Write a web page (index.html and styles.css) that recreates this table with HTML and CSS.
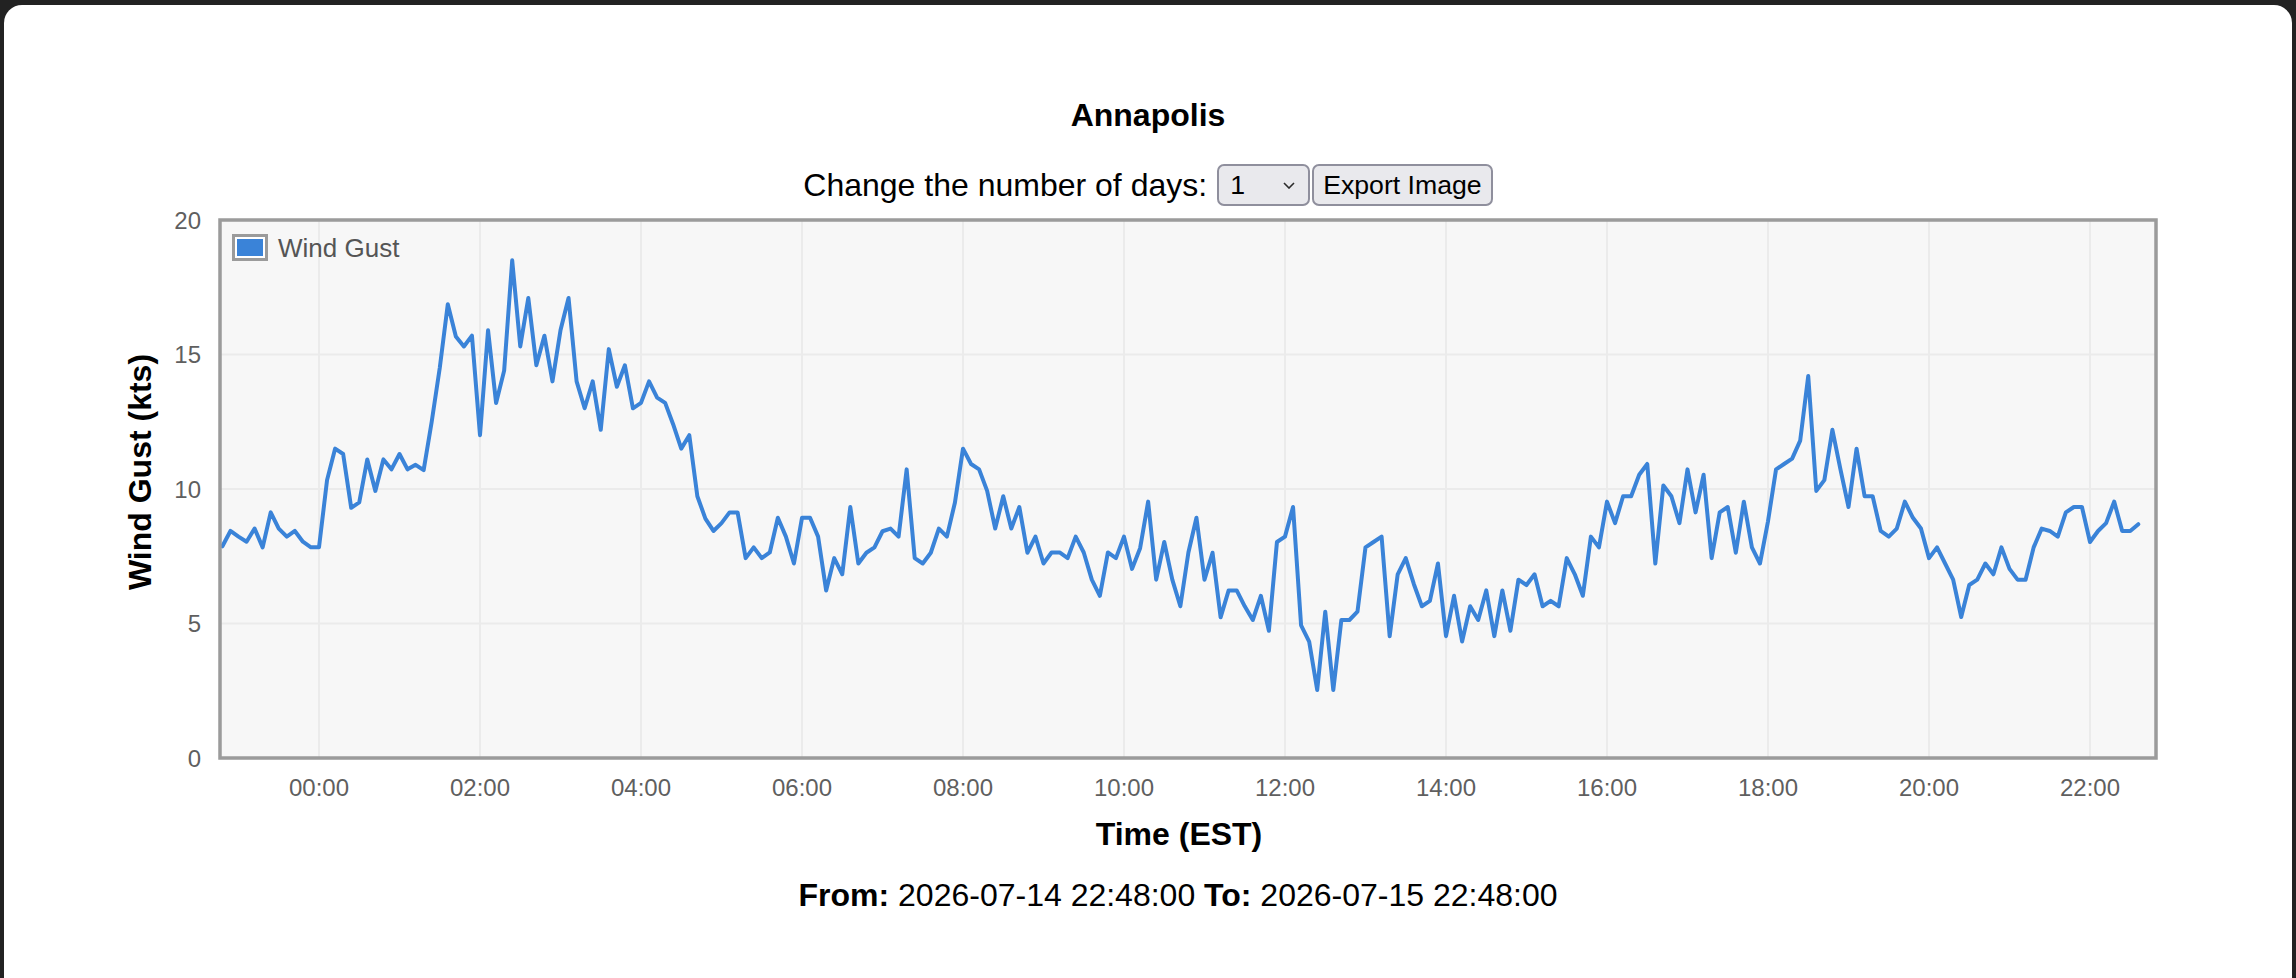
FILE: index.html
```html
<!DOCTYPE html>
<html lang="en">
<head>
<meta charset="utf-8">
<title>Annapolis – Wind Gust</title>
<link rel="stylesheet" href="styles.css">
</head>
<body>
<div class="modal">
  <h2 class="title">Annapolis</h2>
  <div class="controls">
    <label class="controls-label" for="days">Change the number of days:</label>
    <span class="select-wrap">
      <select id="days" class="days-select">
        <option>1</option><option>2</option><option>3</option><option>7</option>
      </select>
      <svg class="chevron" width="12" height="7" viewBox="0 0 12 7"><path d="M1 1 L6 6 L11 1"/></svg>
    </span>
    <button class="export-btn" type="button">Export Image</button>
  </div>

  <svg class="chart" width="2288" height="671" viewBox="0 0 2288 671">
    <g transform="translate(-4 -206)">
      <rect class="plot-bg" x="220" y="220" width="1936" height="538"/>
      <g class="grid">
        <line x1="319" y1="220" x2="319" y2="758"/>
        <line x1="480" y1="220" x2="480" y2="758"/>
        <line x1="641" y1="220" x2="641" y2="758"/>
        <line x1="802" y1="220" x2="802" y2="758"/>
        <line x1="963" y1="220" x2="963" y2="758"/>
        <line x1="1124" y1="220" x2="1124" y2="758"/>
        <line x1="1285" y1="220" x2="1285" y2="758"/>
        <line x1="1446" y1="220" x2="1446" y2="758"/>
        <line x1="1607" y1="220" x2="1607" y2="758"/>
        <line x1="1768" y1="220" x2="1768" y2="758"/>
        <line x1="1929" y1="220" x2="1929" y2="758"/>
        <line x1="2090" y1="220" x2="2090" y2="758"/>
        <line x1="220" y1="354.5" x2="2156" y2="354.5"/>
        <line x1="220" y1="489" x2="2156" y2="489"/>
        <line x1="220" y1="623.5" x2="2156" y2="623.5"/>
      </g>
      <polyline class="series" transform="translate(222.4 758) scale(8.05 -26.9)" points="0,7.87 1,8.44 2,8.23 3,8.04 4,8.53 5,7.83 6,9.13 7,8.53 8,8.23 9,8.44 10,8.04 11,7.83 12,7.83 13,10.33 14,11.5 15,11.3 16,9.3 17,9.5 18,11.1 19,9.93 20,11.1 21,10.73 22,11.3 23,10.73 24,10.9 25,10.7 26,12.5 27,14.5 28,16.87 29,15.67 30,15.3 31,15.7 32,12 33,15.9 34,13.2 35,14.4 36,18.5 37,15.3 38,17.1 39,14.6 40,15.7 41,14 42,15.9 43,17.1 44,14 45,13 46,14 47,12.2 48,15.2 49,13.8 50,14.6 51,13 52,13.2 53,14 54,13.4 55,13.2 56,12.4 57,11.5 58,12 59,9.73 60,8.9 61,8.44 62,8.73 63,9.13 64,9.13 65,7.43 66,7.83 67,7.43 68,7.64 69,8.93 70,8.23 71,7.23 72,8.93 73,8.93 74,8.23 75,6.23 76,7.43 77,6.83 78,9.33 79,7.23 80,7.63 81,7.83 82,8.43 83,8.53 84,8.23 85,10.73 86,7.43 87,7.23 88,7.63 89,8.53 90,8.23 91,9.5 92,11.5 93,10.93 94,10.73 95,9.93 96,8.53 97,9.73 98,8.53 99,9.33 100,7.63 101,8.23 102,7.23 103,7.64 104,7.64 105,7.43 106,8.23 107,7.64 108,6.63 109,6.03 110,7.64 111,7.43 112,8.23 113,7.03 114,7.8 115,9.53 116,6.63 117,8.03 118,6.63 119,5.64 120,7.64 121,8.93 122,6.63 123,7.63 124,5.23 125,6.23 126,6.23 127,5.64 128,5.13 129,6.03 130,4.73 131,8.03 132,8.23 133,9.33 134,4.93 135,4.33 136,2.53 137,5.44 138,2.53 139,5.13 140,5.13 141,5.44 142,7.83 143,8.03 144,8.23 145,4.53 146,6.83 147,7.43 148,6.47 149,5.64 150,5.84 151,7.23 152,4.53 153,6.03 154,4.33 155,5.64 156,5.13 157,6.23 158,4.53 159,6.23 160,4.73 161,6.63 162,6.43 163,6.83 164,5.64 165,5.84 166,5.64 167,7.43 168,6.83 169,6.03 170,8.23 171,7.83 172,9.53 173,8.73 174,9.73 175,9.73 176,10.53 177,10.93 178,7.23 179,10.13 180,9.73 181,8.73 182,10.73 183,9.13 184,10.53 185,7.43 186,9.13 187,9.33 188,7.63 189,9.53 190,7.83 191,7.23 192,8.8 193,10.73 194,10.93 195,11.13 196,11.8 197,14.2 198,9.93 199,10.33 200,12.2 201,10.73 202,9.33 203,11.5 204,9.73 205,9.73 206,8.44 207,8.23 208,8.53 209,9.53 210,8.93 211,8.53 212,7.43 213,7.83 214,7.23 215,6.63 216,5.24 217,6.43 218,6.63 219,7.23 220,6.83 221,7.83 222,7.03 223,6.63 224,6.63 225,7.83 226,8.53 227,8.44 228,8.23 229,9.13 230,9.33 231,9.33 232,8.03 233,8.44 234,8.73 235,9.53 236,8.44 237,8.44 238,8.69"/>
      <rect class="plot-border" x="220" y="220" width="1936" height="538"/>

      <g class="legend">
        <rect class="legend-frame" x="233.5" y="235.5" width="33" height="24"/>
        <rect class="legend-swatch" x="237" y="239" width="26" height="17"/>
        <text class="legend-text" x="278" y="257">Wind Gust</text>
      </g>

      <g class="ticks y-ticks">
        <text x="201" y="229">20</text>
        <text x="201" y="363">15</text>
        <text x="201" y="497.5">10</text>
        <text x="201" y="632">5</text>
        <text x="201" y="766.5">0</text>
      </g>
      <g class="ticks x-ticks">
        <text x="319" y="796">00:00</text>
        <text x="480" y="796">02:00</text>
        <text x="641" y="796">04:00</text>
        <text x="802" y="796">06:00</text>
        <text x="963" y="796">08:00</text>
        <text x="1124" y="796">10:00</text>
        <text x="1285" y="796">12:00</text>
        <text x="1446" y="796">14:00</text>
        <text x="1607" y="796">16:00</text>
        <text x="1768" y="796">18:00</text>
        <text x="1929" y="796">20:00</text>
        <text x="2090" y="796">22:00</text>
      </g>
      <text class="axis-title" transform="translate(151 472) rotate(-90)" x="0" y="0">Wind Gust (kts)</text>
      <text class="axis-title" x="1179" y="844.5">Time (EST)</text>
    </g>
  </svg>

  <p class="range"><b>From:</b> 2026-07-14 22:48:00 <b>To:</b> 2026-07-15 22:48:00</p>
</div>
</body>
</html>
```

FILE: styles.css
```css
html, body {
  margin: 0;
  padding: 0;
  height: 100%;
  overflow: hidden;
}

body {
  background: #222222;
  font-family: "Liberation Sans", Arial, Helvetica, sans-serif;
  color: #000;
}

.modal {
  margin: 5px 4px 0 4px;
  min-height: 973px;
  background: #ffffff;
  border-radius: 18px 18px 0 0;
  padding-top: 92px;
  box-sizing: border-box;
}

.title {
  margin: 0;
  font-size: 32px;
  line-height: 36px;
  font-weight: bold;
  text-align: center;
}

.controls {
  margin-top: 31px;
  display: flex;
  justify-content: center;
  align-items: center;
  height: 42px;
}

.controls-label {
  font-size: 32px;
  line-height: 36px;
  margin-right: 10px;
}

.select-wrap {
  position: relative;
  display: inline-block;
  height: 42px;
  margin-right: 2px;
}

.days-select {
  -webkit-appearance: none;
  appearance: none;
  box-sizing: border-box;
  width: 93px;
  height: 42px;
  margin: 0;
  padding: 0 0 0 11px;
  border: 2px solid #8f8f9d;
  border-radius: 7px;
  background: #e9e9ed;
  font-family: "Liberation Sans", Arial, Helvetica, sans-serif;
  font-size: 26.67px;
  color: #000;
}

.chevron {
  position: absolute;
  right: 15px;
  top: 18px;
  fill: none;
  stroke: #2b2b2b;
  stroke-width: 1.6;
  pointer-events: none;
}

.export-btn {
  box-sizing: border-box;
  height: 42px;
  margin: 0;
  padding: 0 9px;
  border: 2px solid #8f8f9d;
  border-radius: 7px;
  background: #e9e9ed;
  font-family: "Liberation Sans", Arial, Helvetica, sans-serif;
  font-size: 26.67px;
  color: #000;
}

.chart {
  display: block;
}

.plot-bg {
  fill: #f7f7f7;
}

.grid line {
  stroke: #ebebeb;
  stroke-width: 2;
}

.plot-border {
  fill: none;
  stroke: #9b9b9b;
  stroke-width: 3.5;
}

.series {
  fill: none;
  stroke: #3a83d8;
  stroke-width: 4;
  stroke-linejoin: round;
  stroke-linecap: round;
  vector-effect: non-scaling-stroke;
}

.legend-frame {
  fill: #ffffff;
  stroke: #9b9b9b;
  stroke-width: 3;
}

.legend-swatch {
  fill: #3a83d8;
}

.legend-text {
  font-family: "Liberation Sans", Arial, Helvetica, sans-serif;
  font-size: 26px;
  fill: #555555;
}

.ticks text {
  font-family: "Liberation Sans", Arial, Helvetica, sans-serif;
  font-size: 24px;
  fill: #5f5f5f;
}

.y-ticks text {
  text-anchor: end;
}

.x-ticks text {
  text-anchor: middle;
}

.axis-title {
  font-family: "Liberation Sans", Arial, Helvetica, sans-serif;
  font-size: 32px;
  font-weight: bold;
  fill: #000;
  text-anchor: middle;
}

.range {
  margin: 0;
  padding-left: 60px;
  font-size: 32px;
  line-height: 36px;
  text-align: center;
}
```
